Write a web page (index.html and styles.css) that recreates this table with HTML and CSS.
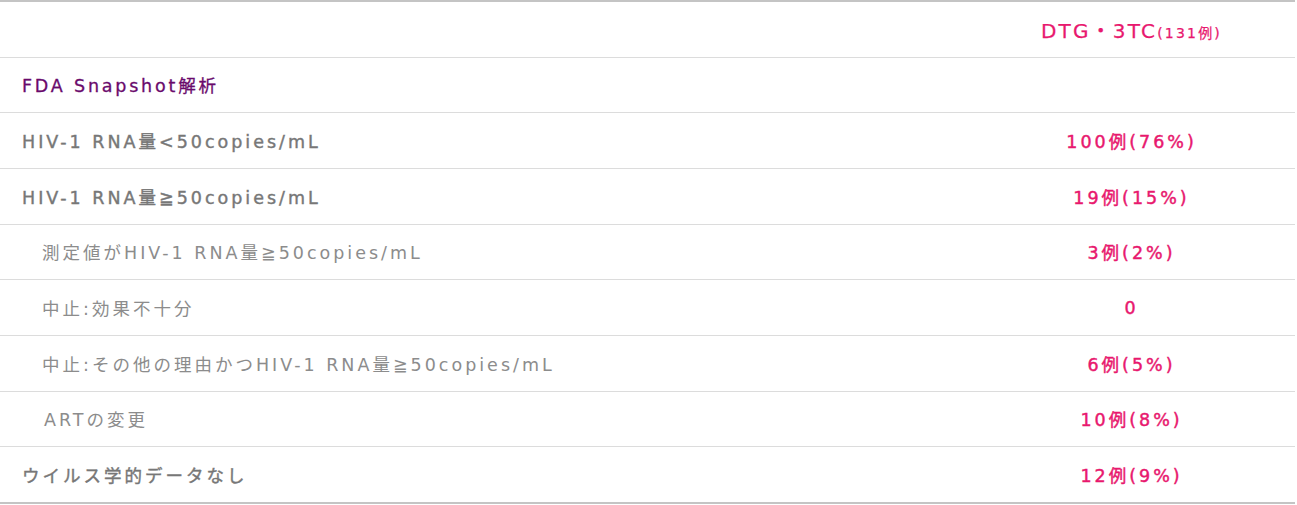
FILE: index.html
```html
<!DOCTYPE html>
<html lang="ja">
<head>
<meta charset="utf-8">
<title>FDA Snapshot解析</title>
<link rel="stylesheet" href="styles.css">
</head>
<body>
<table class="result-table">
  <thead>
    <tr>
      <th class="label-cell"></th>
      <th class="value-cell head-value"><span class="arm">DTG・3TC</span><span class="arm-n">(131例)</span></th>
    </tr>
  </thead>
  <tbody>
    <tr>
      <td class="label-cell section">FDA Snapshot解析</td>
      <td class="value-cell"></td>
    </tr>
    <tr>
      <td class="label-cell strong">HIV-1 RNA量&lt;50copies/mL</td>
      <td class="value-cell">100例(76%)</td>
    </tr>
    <tr>
      <td class="label-cell strong">HIV-1 RNA量≧50copies/mL</td>
      <td class="value-cell">19例(15%)</td>
    </tr>
    <tr>
      <td class="label-cell sub">測定値がHIV-1 RNA量≧50copies/mL</td>
      <td class="value-cell">3例(2%)</td>
    </tr>
    <tr>
      <td class="label-cell sub">中止:効果不十分</td>
      <td class="value-cell">0</td>
    </tr>
    <tr>
      <td class="label-cell sub">中止:その他の理由かつHIV-1 RNA量≧50copies/mL</td>
      <td class="value-cell">6例(5%)</td>
    </tr>
    <tr>
      <td class="label-cell sub sub-art">ARTの変更</td>
      <td class="value-cell">10例(8%)</td>
    </tr>
    <tr>
      <td class="label-cell strong">ウイルス学的データなし</td>
      <td class="value-cell">12例(9%)</td>
    </tr>
  </tbody>
</table>
</body>
</html>
```
FILE: styles.css
```css
html, body {
  margin: 0;
  padding: 0;
  background: #ffffff;
}

body {
  font-family: "DejaVu Sans", "Noto Sans CJK JP", sans-serif;
  color: #7a7a7a;
}

.result-table {
  width: 1295px;
  border-collapse: collapse;
  border-top: 2px solid #c4c4c4;
  border-bottom: 2px solid #c4c4c4;
}

.result-table th,
.result-table td {
  height: 54.67px;
  padding: 0;
  border-bottom: 1px solid #dcdcdc;
  font-weight: 400;
  vertical-align: middle;
  font-size: 17.5px;
  letter-spacing: 3px;
}

.result-table tbody tr:last-child td {
  border-bottom: none;
}

.result-table .label-cell {
  text-align: left;
  padding-left: 22px;
}

.result-table .value-cell {
  width: 327px;
  text-align: center;
  color: #e8186e;
  -webkit-text-stroke: 0.45px #e8186e;
}

.result-table .head-value {
  -webkit-text-stroke: 0.25px #e8186e;
  letter-spacing: 2.2px;
}

.arm {
  font-size: 20px;
}

.arm-n {
  font-size: 14px;
}

.result-table td.section {
  color: #6a0a6c;
  -webkit-text-stroke: 0.3px #6a0a6c;
  letter-spacing: 2.8px;
}

.result-table td.strong {
  color: #777777;
  -webkit-text-stroke: 0.4px #777777;
}

.result-table td.sub {
  padding-left: 42px;
  color: #8c8c8c;
}

.result-table td.sub-art {
  padding-left: 44px;
}
```
